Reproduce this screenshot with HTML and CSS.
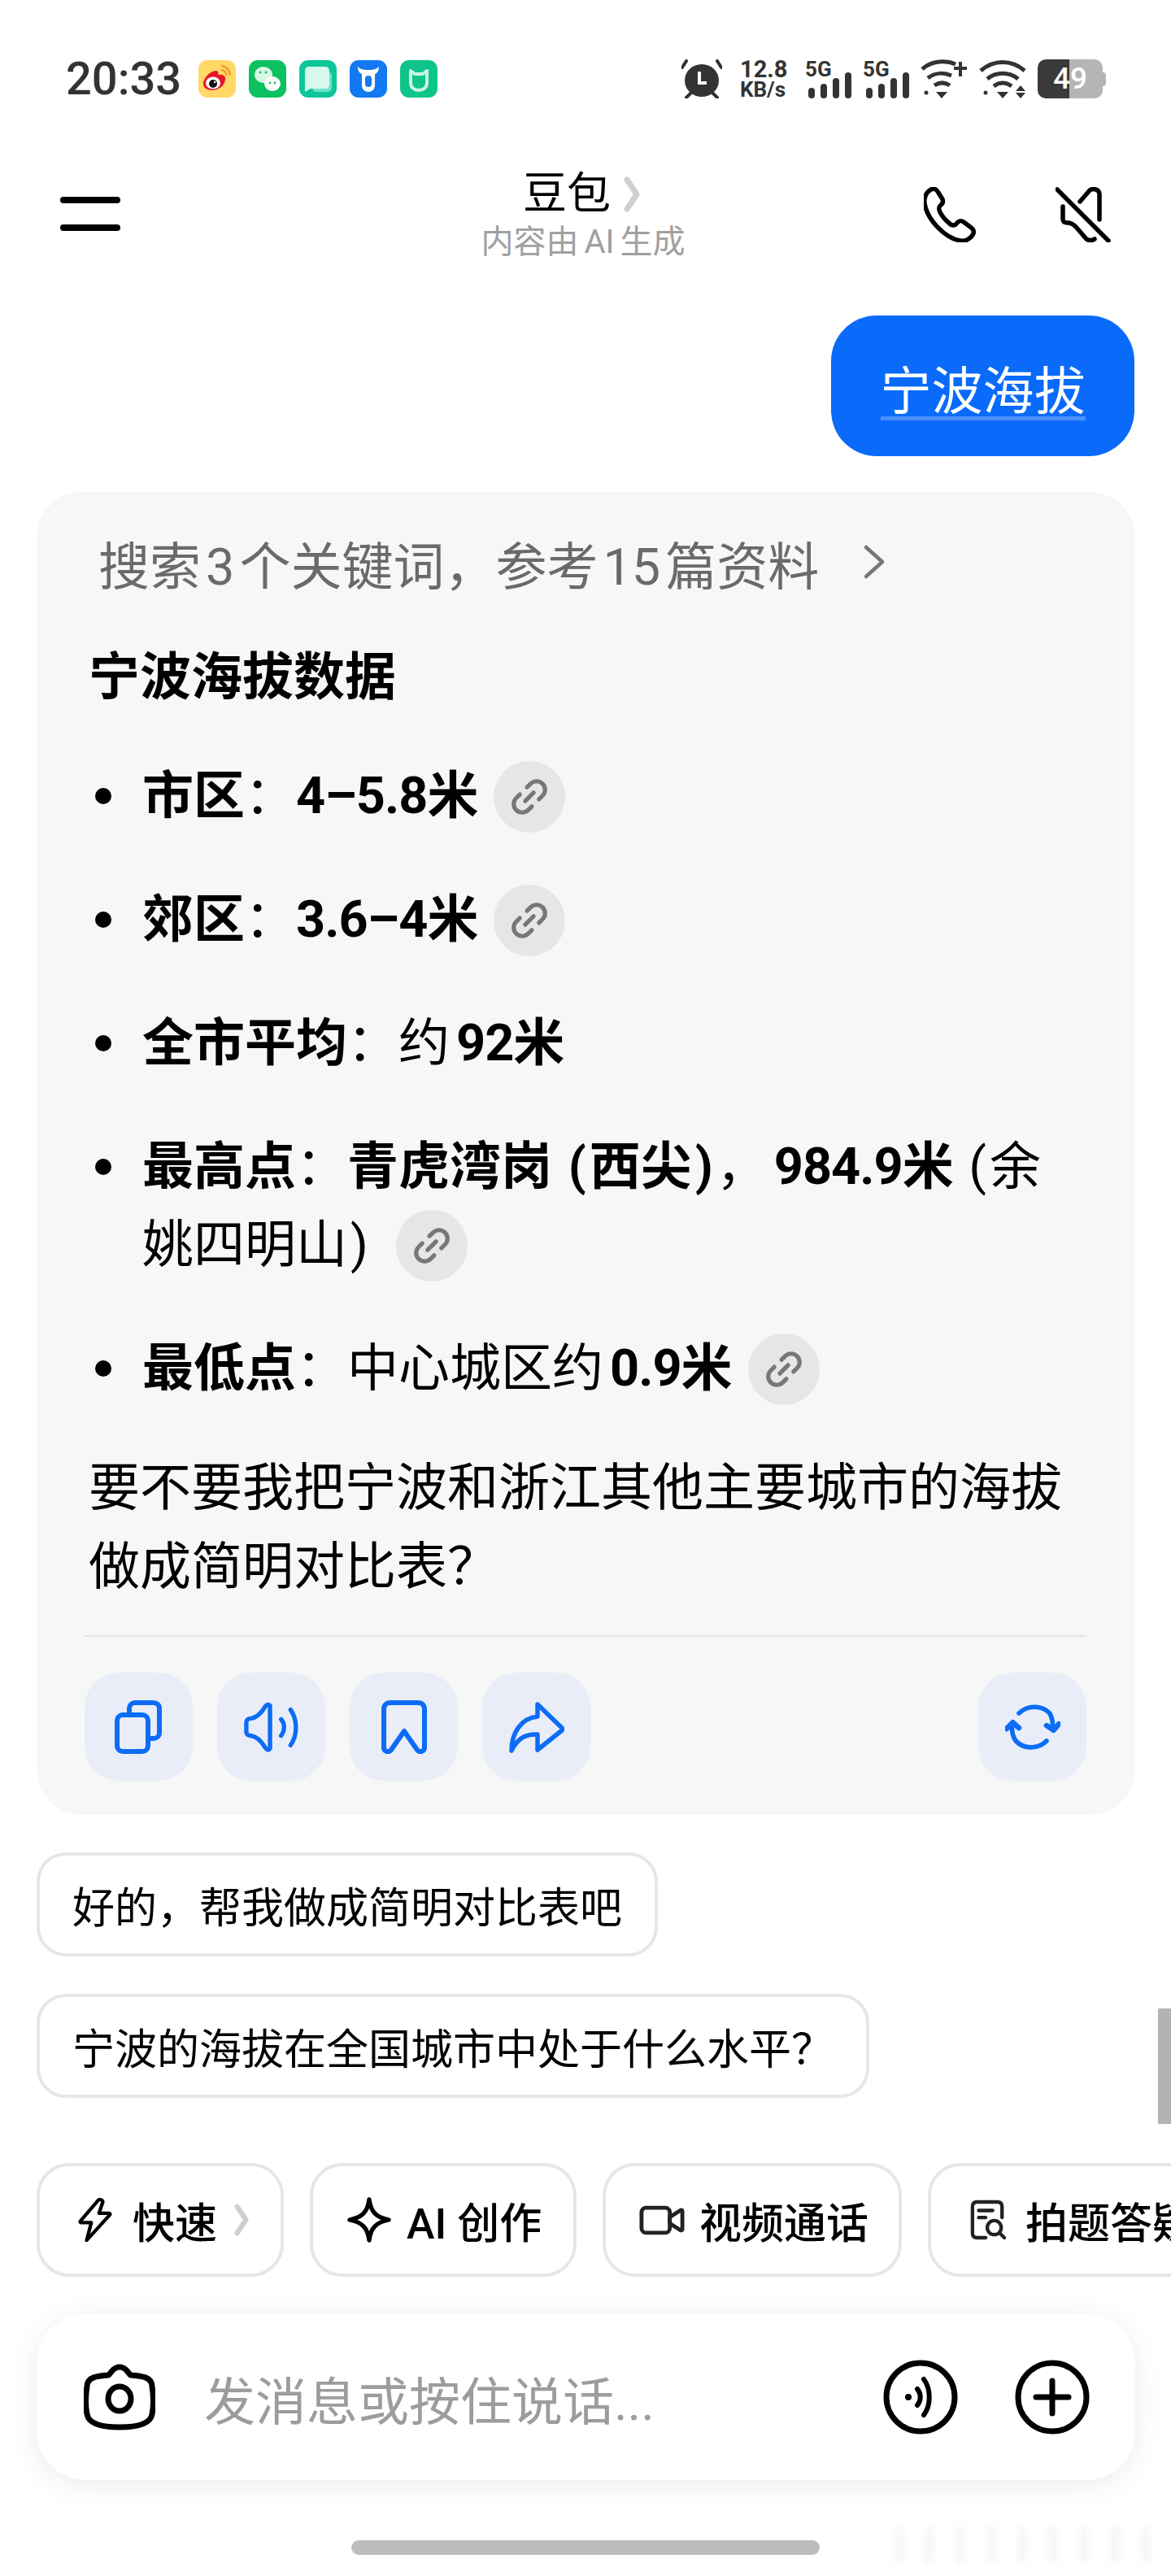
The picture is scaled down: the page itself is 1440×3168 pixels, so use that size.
FILE: index.html
```html
<!DOCTYPE html>
<html lang="zh">
  <head>
    <meta charset="utf-8">
    <title>豆包</title>
    <link rel="stylesheet" href="styles.css">
  </head>
  <body>
    <svg width="0" height="0" class="defs">
      <symbol id="link" viewBox="0 0 48 48">
        <g transform="rotate(-45 24 24)" fill="none" stroke="#777" stroke-width="5" stroke-linecap="round">
          <path d="M18 14h-6a10 10 0 0 0 0 20h6"/>
          <path d="M30 14h6a10 10 0 0 1 0 20h-6"/>
          <path d="M17 24h14"/>
        </g>
      </symbol>
    </svg>
    <div class="screen">
      <div class="status">
        <div class="status-left">
          <span class="time">20:33</span>
          <div class="apps">
            <svg class="app" viewBox="0 0 46 46"><rect width="46" height="46" rx="11" fill="#ffd868"/><path d="M6 29c0-7 8-15 15-16c3 0 4 2 3 5c5-1 10 1 9 6c-1 8-9 13-16 13c-6 0-11-3-11-8z" fill="#e6162d"/><ellipse cx="18" cy="28" rx="9" ry="7.5" fill="#fff"/><circle cx="18" cy="29" r="5" fill="#111"/><circle cx="20" cy="27" r="1.2" fill="#fff"/><path d="M29 7c5 1 9 5 10 11M29 12c3 1 5 3 5 6" fill="none" stroke="#f0a030" stroke-width="2.5" stroke-linecap="round"/></svg>
            <svg class="app" viewBox="0 0 46 46"><rect width="46" height="46" rx="11" fill="#0cc160"/><ellipse cx="18" cy="18" rx="11" ry="10" fill="#d8f7e4"/><ellipse cx="29" cy="29" rx="10" ry="9" fill="#fff"/><circle cx="26" cy="28" r="1.4" fill="#0cc160"/><circle cx="32" cy="28" r="1.4" fill="#0cc160"/><circle cx="14" cy="15" r="1.4" fill="#0cc160"/><circle cx="21" cy="15" r="1.4" fill="#0cc160"/></svg>
            <svg class="app" viewBox="0 0 46 46"><rect width="46" height="46" rx="11" fill="#0dc79a"/><rect x="16" y="14" width="24" height="25" rx="5" fill="#6fe3c6"/><path d="M12 8h20c3 0 5 2 5 5v17c0 3-2 5-5 5H14l-7 4V13c0-3 2-5 5-5z" fill="#d8f8ee"/></svg>
            <svg class="app" viewBox="0 0 46 46"><rect width="46" height="46" rx="11" fill="#1379f2"/><path d="M10 8c0 5 2 8 5 9v14c0 5 4 8 8 8s8-3 8-8V17c3-1 5-4 5-9c-3 3-6 4-13 4s-10-1-13-4z" fill="#fff"/><rect x="19" y="19" width="8" height="14" rx="4" fill="#1379f2"/></svg>
            <svg class="app" viewBox="0 0 46 46"><rect width="46" height="46" rx="11" fill="#0fc48a"/><path d="M13 13l5 4h10l5-4v15c0 6-5 9-10 9s-10-3-10-9z" fill="none" stroke="#c9f5e4" stroke-width="4" stroke-linejoin="round"/></svg>
          </div>
        </div>
        <div class="status-right">
          <svg class="st-alarm" viewBox="0 0 50 48" fill="#333"><ellipse cx="25" cy="26" rx="21" ry="20"/><path d="M6 2L1 10M44 2l5 8M12 41l-6 6M38 41l6 6" stroke="#333" stroke-width="4" stroke-linecap="round"/><path d="M22 15v14h9" fill="none" stroke="#fff" stroke-width="4"/></svg>
          <div class="speed"><span class="speed-num">12.8</span><span class="speed-unit">KB/s</span></div>
          <div class="signal"><span class="five-g">5G</span><i class="b1"></i><i class="b2"></i><i class="b3"></i><i class="b4"></i></div>
          <div class="signal"><span class="five-g">5G</span><i class="b1"></i><i class="b2"></i><i class="b3"></i><i class="b4"></i></div>
          <svg class="st-wifi" viewBox="0 0 58 48" fill="none" stroke="#333" stroke-width="5"><path d="M2 12c12-11 30-11 41-6M9 23c9-7 20-7 29-3M17 32c6-4 13-4 19 0"/><path d="M26 48l-7-8h14z" fill="#333" stroke="none"/><path d="M41 11h16M49 3v18" stroke-width="4"/><circle cx="7" cy="41" r="2.5" fill="#333" stroke="none"/></svg>
          <svg class="st-wifi" viewBox="0 0 58 48" fill="none" stroke="#333" stroke-width="5"><path d="M2 14c16-14 38-14 54 0M10 24c11-9 27-9 38 0M18 33c7-5 15-5 22 0"/><path d="M29 48l-7-8h14z" fill="#333" stroke="none"/><path d="M51 32l-6 7h12zM51 48l-6-7h12z" fill="#333" stroke="none"/><circle cx="8" cy="41" r="2.5" fill="#333" stroke="none"/></svg>
          <div class="battery"><span class="bat-num">49</span></div>
        </div>
      </div>

      <div class="nav">
        <div class="burger"><i></i><i></i></div>
        <div class="nav-title">
          <div class="nav-name">豆包<svg class="chev" viewBox="0 0 20 44"><path d="M4 4l12 18L4 40" fill="none" stroke="#cfcfcf" stroke-width="7" stroke-linecap="round" stroke-linejoin="round"/></svg></div>
          <div class="nav-sub">内容由 AI 生成</div>
        </div>
        <div class="nav-actions">
          <svg class="nav-ico" viewBox="0 0 68 68" fill="none" stroke="#000" stroke-width="5.5" stroke-linejoin="round"><path d="M9 3c4-2 7 0 9 4l5 8c1 3 1 5-2 7c-3 3-3 5-1 9c3 6 8 11 13 15c4 2 6 1 8-2c3-3 5-3 8-1l8 6c4 3 6 6 3 10c-3 5-9 8-15 7C26 63 4 40 1 20C0 13 3 6 9 3z"/></svg>
          <svg class="nav-ico" viewBox="0 0 68 68" fill="none" stroke="#000" stroke-width="5.5" stroke-linecap="round" stroke-linejoin="round"><path d="M2 3l63 63"/><path d="M30 18L42 4c5-3 12-1 12 5v31"/><path d="M9 24v15c0 4 2 5 6 5c4 0 7 2 10 5l13 15c3 2 7 2 10 0"/></svg>
        </div>
      </div>

      <div class="user-row"><div class="bubble"><span>宁波海拔</span></div></div>

      <div class="answer">
        <div class="search-line"><span>搜索<b>3</b>个关键词，参考<b>15</b>篇资料</span><svg class="search-chev" viewBox="0 0 30 44"><path d="M4 4l20 18L4 40" fill="none" stroke="#777" stroke-width="4.5" stroke-linecap="round" stroke-linejoin="round"/></svg></div>
        <h3 class="heading">宁波海拔数据</h3>
        <ul class="facts">
          <li><strong>市区</strong>：<strong class="num">4–5.8米</strong><span class="cite"><svg><use href="#link"/></svg></span></li>
          <li><strong>郊区</strong>：<strong class="num">3.6–4米</strong><span class="cite"><svg><use href="#link"/></svg></span></li>
          <li><strong>全市平均</strong>：约<strong class="num gap">92米</strong></li>
          <li><strong>最高点</strong>：<strong>青虎湾岗 <span class="pa">(</span>西尖<span class="pa">)</span></strong>，<strong class="num gap">984.9米</strong> <span class="pa">(</span>余姚四明山<span class="pa">)</span><span class="cite cite-far"><svg><use href="#link"/></svg></span></li>
          <li><strong>最低点</strong>：中心城区约<strong class="num gap">0.9米</strong><span class="cite"><svg><use href="#link"/></svg></span></li>
        </ul>
        <p class="ask">要不要我把宁波和浙江其他主要城市的海拔做成简明对比表？</p>
        <div class="actions">
          <div class="act"><svg viewBox="0 0 60 66" fill="none" stroke="#0c6cf5" stroke-width="6" stroke-linejoin="round"><rect x="3" y="18" width="38" height="45" rx="7"/><path d="M18 18V10c0-4 3-7 7-7h22c5 0 8 3 8 7v30c0 4-3 7-7 7h-7"/></svg></div>
          <div class="act"><svg viewBox="0 0 70 62" fill="none" stroke="#0c6cf5" stroke-width="5.5" stroke-linecap="round" stroke-linejoin="round"><path d="M33 4v54c-2 3-4 2-6-1c-5-8-10-14-18-15c-4 0-6-2-6-5V25c0-3 2-5 6-5c8-1 13-7 18-15c2-3 5-3 6-1z"/><path d="M47 21c5 6 5 14 0 21M59 9c9 13 9 32 0 45"/></svg></div>
          <div class="act"><svg viewBox="0 0 56 66" fill="none" stroke="#0c6cf5" stroke-width="6" stroke-linejoin="round"><path d="M3 11c0-5 3-8 8-8h34c5 0 8 3 8 8v47c0 5-6 7-9 3L28 38L12 61c-3 4-9 2-9-3z"/></svg></div>
          <div class="act"><svg viewBox="0 0 68 62" fill="none" stroke="#0c6cf5" stroke-width="5.5" stroke-linecap="round" stroke-linejoin="round"><path d="M35 3l30 29a2 2 0 0 1 0 3L35 59V40C19 39 10 46 3 60C3 38 15 20 35 18z"/></svg></div>
          <div class="act act-last"><svg viewBox="0 0 72 60" fill="none" stroke="#0c6cf5" stroke-width="6" stroke-linecap="round" stroke-linejoin="round"><path d="M18 12c11-11 30-11 40 0c3 5 4 9 4 16"/><path d="M54 28l9 6l7-8" stroke-width="7"/><path d="M54 48c-11 11-30 11-40 0c-4-5-5-10-5-18"/><path d="M2 32l8-8l8 7" stroke-width="7"/></svg></div>
        </div>
      </div>

      <div class="suggest"><span>好的，帮我做成简明对比表吧</span></div>
      <div class="suggest"><span>宁波的海拔在全国城市中处于什么水平？</span></div>

      <div class="tools">
        <div class="tool tool-fast"><svg class="ico-bolt" viewBox="0 0 44 58" fill="none" stroke="#000" stroke-width="4.5" stroke-linejoin="round"><path d="M26 3L3 30c-1 1 0 2 1 2h13L11 55L41 22c1-1 0-2-1-2H27L32 5c0-2-4-4-6-2z"/></svg><span>快速</span><svg class="tool-chev" viewBox="0 0 20 44"><path d="M4 4l12 18L4 40" fill="none" stroke="#cfcfcf" stroke-width="7" stroke-linecap="round" stroke-linejoin="round"/></svg></div>
        <div class="tool tool-ai"><svg class="ico-star" viewBox="0 0 56 58" fill="none" stroke="#000" stroke-width="5.5" stroke-linejoin="round"><path d="M28 3c2 16 9 23 25 26c-16 3-23 10-25 26c-2-16-9-23-25-26c16-3 23-10 25-26z"/></svg><span>AI 创作</span></div>
        <div class="tool tool-video"><svg class="ico-video" viewBox="0 0 58 38" fill="none" stroke="#222" stroke-width="5" stroke-linejoin="round"><rect x="3" y="3" width="36" height="32" rx="6"/><path d="M39 15l14-9c1 0 2 0 2 2v22c0 2-1 2-2 2L39 23z"/></svg><span>视频通话</span></div>
        <div class="tool tool-doc"><svg class="ico-doc" viewBox="0 0 46 52" fill="none" stroke="#222" stroke-width="4.5" stroke-linecap="round"><path d="M20 49H9c-4 0-6-2-6-6V9c0-4 2-6 6-6h26c4 0 6 2 6 6v14"/><path d="M11 14h18M11 23h9"/><circle cx="31" cy="36" r="9"/><path d="M38 43l6 6"/></svg><span>拍题答疑</span></div>
      </div>

      <div class="input-bar">
        <svg class="cam" viewBox="0 0 88 82" fill="none" stroke="#000" stroke-width="7"><path d="M30 14c4-2 5-10 14-10s10 8 14 10c13 1 26 2 26 14c2 12 2 24 0 34c-2 12-18 16-40 16S6 74 4 62c-2-10-2-22 0-34c0-12 13-13 26-14z"/><ellipse cx="44" cy="43" rx="14" ry="15"/></svg>
        <span class="placeholder">发消息或按住说话...</span>
        <svg class="round-ico" viewBox="0 0 92 92" fill="none" stroke="#000" stroke-width="7" stroke-linecap="round"><circle cx="46" cy="46" r="42"/><circle cx="31" cy="46" r="4" fill="#000" stroke="none"/><path d="M42 36c5 6 5 14 0 20" stroke-width="6"/><path d="M50 24c9 12 9 32 0 44" stroke-width="6"/></svg>
        <svg class="round-ico" viewBox="0 0 92 92" fill="none" stroke="#000" stroke-width="7" stroke-linecap="round"><circle cx="46" cy="46" r="42"/><path d="M26 46h40M46 26v40"/></svg>
      </div>
      <div class="home-bar"></div>

      <div class="scroll-thumb"></div>
      <div class="watermark"></div>
    </div>
  </body>
</html>
```

FILE: styles.css
```css
* {
  box-sizing: border-box;
}
html, body {
  margin: 0;
  padding: 0;
}
body {
  background-color: #fff;
  font-family: Roboto, "Noto Sans CJK SC", sans-serif;
  color: #000;
}
.defs {
  display: block;
  height: 0;
}
.screen {
  position: relative;
  width: 1440px;
  height: 3168px;
  overflow: hidden;
}

/* status bar */
.status {
  height: 122px;
  padding: 73px 80px 0 81px;
  display: flex;
  justify-content: space-between;
}
.status-left {
  display: flex;
  align-items: center;
  height: 48px;
}
.time {
  width: 163px;
  font-size: 56px;
  font-weight: 500;
  color: #333;
  line-height: 48px;
}
.apps {
  display: flex;
  gap: 16px;
}
.app {
  width: 46px;
  height: 46px;
}
.status-right {
  display: flex;
  align-items: center;
  height: 48px;
}
.st-alarm {
  width: 50px;
  height: 48px;
  margin-right: 22px;
}
.speed {
  width: 60px;
  margin-right: 20px;
  font-weight: 700;
  color: #333;
  white-space: nowrap;
}
.speed span {
  display: block;
}
.speed-num {
  font-size: 29px;
  line-height: 27px;
}
.speed-unit {
  font-size: 26px;
  line-height: 23px;
}
.signal {
  position: relative;
  display: flex;
  align-items: flex-end;
  gap: 7px;
  width: 57px;
  height: 48px;
  margin-right: 14px;
  padding-left: 4px;
}
.signal i {
  display: block;
  width: 8px;
  border-radius: 4px;
  background: #333;
}
.signal .b1 { height: 13px; }
.signal .b2 { height: 18px; }
.signal .b3 { height: 25px; }
.signal .b4 { height: 32px; }
.five-g {
  position: absolute;
  left: 0;
  top: 0;
  font-weight: 700;
  font-size: 26px;
  line-height: 24px;
  color: #333;
}
.st-wifi {
  width: 58px;
  height: 48px;
  margin-right: 14px;
}
.battery {
  position: relative;
  width: 80px;
  height: 48px;
  margin-right: 4px;
  border-radius: 10px;
  background: linear-gradient(to right, #3a3a3a 0, #3a3a3a 39px, #b5b5b5 39px);
  text-align: center;
}
.battery::after {
  content: "";
  position: absolute;
  right: -4px;
  top: 16px;
  width: 4px;
  height: 17px;
  border-radius: 0 4px 4px 0;
  background: #b5b5b5;
}
.bat-num {
  font-weight: 500;
  font-size: 37px;
  line-height: 48px;
  color: #fff;
}

/* nav */
.nav {
  height: 266px;
  padding: 90px 74px 0 74px;
  display: flex;
  align-items: flex-start;
  justify-content: space-between;
  position: relative;
}
.burger {
  width: 74px;
  padding-top: 30px;
}
.burger i {
  display: block;
  height: 8px;
  margin-bottom: 26px;
  border-radius: 4px;
  background: #000;
}
.nav-title {
  position: absolute;
  left: 0;
  right: 0;
  top: 86px;
  text-align: center;
}
.nav-name {
  font-size: 54px;
  line-height: 62px;
  margin-right: 10px;
  display: flex;
  justify-content: center;
  align-items: center;
  gap: 16px;
}
.chev {
  width: 20px;
  height: 44px;
}
.nav-sub {
  font-size: 40px;
  line-height: 48px;
  color: #a0a0a0;
  margin: 4px 6px 0 0;
  word-spacing: -3px;
}
.nav-actions {
  display: flex;
  gap: 94px;
  padding-top: 18px;
}
.nav-ico {
  width: 68px;
  height: 68px;
}

/* user message */
.user-row {
  display: flex;
  justify-content: flex-end;
  padding-right: 45px;
}
.bubble {
  width: 373px;
  height: 173px;
  padding-top: 20px;
  border-radius: 56px;
  background: #0a6bfb;
  display: flex;
  align-items: center;
  justify-content: center;
  color: #fff;
  font-size: 63px;
}
.bubble span {
  border-bottom: 5px solid #4d90fd;
  line-height: 60px;
}

/* answer card */
.answer {
  margin: 44px 44px 0 45px;
  height: 1627px;
  padding: 44px 60px 0 64px;
  border-radius: 56px;
  background: #f7f7f7;
}
.search-line {
  display: flex;
  align-items: center;
  height: 84px;
  padding-left: 12px;
  font-size: 63px;
  color: #6a6a6a;
  white-space: nowrap;
}
.search-line b {
  font-weight: 400;
  margin: 0 6px;
}
.search-chev {
  width: 30px;
  height: 44px;
  margin-left: 54px;
}
.heading {
  margin: 58px 0 0;
  font-size: 63px;
  line-height: 84px;
  font-weight: 700;
}
.facts {
  list-style: none;
  margin: 56px 0 0;
  padding: 0 0 0 66px;
  font-size: 63px;
  line-height: 96px;
}
.facts li {
  position: relative;
  margin-bottom: 56px;
}
.facts li::before {
  content: "";
  position: absolute;
  left: -58px;
  top: 38px;
  width: 20px;
  height: 20px;
  border-radius: 50%;
  background: #000;
}
.facts .num {
  letter-spacing: -1px;
}
.facts .gap {
  margin-left: 8px;
}
.pa {
  margin: 0 4px;
}
.cite {
  display: inline-flex;
  align-items: center;
  justify-content: center;
  width: 88px;
  height: 88px;
  margin: -4px 0 2px 20px;
  border-radius: 50%;
  background: #e6e6e6;
  vertical-align: middle;
}
.cite-far {
  margin-left: 30px;
}
.cite svg {
  width: 50px;
  height: 50px;
}
.ask {
  margin: -6px 0 0;
  font-size: 63px;
  line-height: 97px;
}
.actions {
  display: flex;
  gap: 30px;
  margin: 36px 0 0 -5px;
  padding-top: 44px;
  border-top: 2px solid #e5e5e5;
}
.act {
  width: 133px;
  height: 133px;
  border-radius: 42px;
  background: #e8edf8;
  display: flex;
  align-items: center;
  justify-content: center;
}
.act svg {
  width: 68px;
  height: 66px;
}
.act-last {
  margin-left: auto;
}

/* suggestions */
.suggest {
  margin: 46px 0 0 45px;
}
.suggest span {
  display: inline-block;
  height: 128px;
  padding: 10px 40px 0;
  border: 4px solid #e6e6e6;
  border-radius: 36px;
  font-size: 52px;
  line-height: 112px;
  white-space: nowrap;
}

/* tool chips */
.tools {
  display: flex;
  gap: 32px;
  margin: 80px 0 0 45px;
}
.tool {
  display: flex;
  flex-shrink: 0;
  align-items: center;
  height: 140px;
  border: 4px solid #e6e6e6;
  border-radius: 40px;
  font-size: 52px;
  font-weight: 500;
  white-space: nowrap;
}
.tool-fast {
  width: 304px;
  padding-left: 47px;
  gap: 25px;
}
.tool-ai {
  width: 328px;
  padding-left: 42px;
  gap: 19px;
}
.tool-video {
  width: 368px;
  padding-left: 41px;
  gap: 18px;
}
.tool-doc {
  width: 380px;
  padding-left: 48px;
  gap: 24px;
}
.ico-bolt {
  width: 42px;
  height: 55px;
}
.ico-star {
  width: 54px;
  height: 56px;
}
.ico-video {
  width: 56px;
  height: 37px;
}
.ico-doc {
  width: 44px;
  height: 50px;
}
.tool-chev {
  width: 18px;
  height: 44px;
  margin-left: -4px;
}

/* input */
.input-bar {
  display: flex;
  align-items: center;
  margin: 46px 44px 0 45px;
  height: 204px;
  padding: 0 56px 0 58px;
  border-radius: 60px;
  background: #fff;
  box-shadow: 0 6px 36px rgba(0, 0, 0, 0.08);
}
.cam {
  width: 88px;
  height: 82px;
}
.placeholder {
  flex: 1;
  margin-left: 60px;
  font-size: 63px;
  color: #9c9c9c;
}
.round-ico {
  width: 92px;
  height: 92px;
  margin-left: 70px;
}
.home-bar {
  width: 576px;
  height: 18px;
  margin: 74px 0 0 432px;
  border-radius: 9px;
  background: #bdbdbd;
}
.scroll-thumb {
  position: absolute;
  right: 0;
  top: 2470px;
  width: 16px;
  height: 142px;
  background: #b3b3b3;
}
.watermark {
  position: absolute;
  left: 1100px;
  top: 3108px;
  width: 330px;
  height: 44px;
  background: repeating-linear-gradient(to right, #f5f5f5 0, #f5f5f5 10px, #fff 10px, #fff 38px);
  filter: blur(4px);
}
```
